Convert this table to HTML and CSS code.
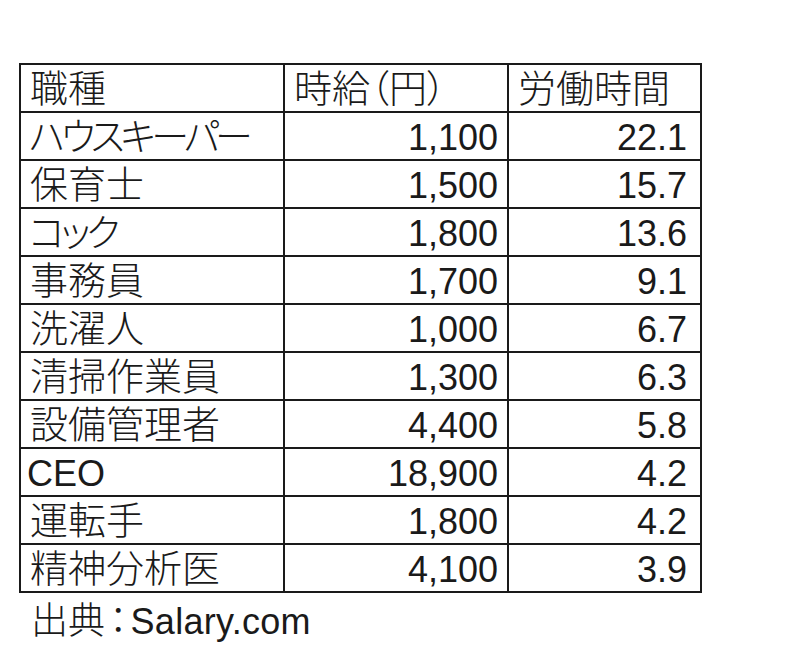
FILE: index.html
```html
<!DOCTYPE html>
<html lang="ja">
<head>
<meta charset="utf-8">
<link rel="stylesheet" href="styles.css">
</head>
<body>
<div class="page">
  <table class="data">
    <colgroup>
      <col class="c1"><col class="c2"><col class="c3">
    </colgroup>
    <tr><td>職種</td><td>時給（円）</td><td>労働時間</td></tr>
    <tr><td class="kana">ハウスキーパー</td><td class="num">1,100</td><td class="num">22.1</td></tr>
    <tr><td>保育士</td><td class="num">1,500</td><td class="num">15.7</td></tr>
    <tr><td class="kana">コック</td><td class="num">1,800</td><td class="num">13.6</td></tr>
    <tr><td>事務員</td><td class="num">1,700</td><td class="num">9.1</td></tr>
    <tr><td>洗濯人</td><td class="num">1,000</td><td class="num">6.7</td></tr>
    <tr><td>清掃作業員</td><td class="num">1,300</td><td class="num">6.3</td></tr>
    <tr><td>設備管理者</td><td class="num">4,400</td><td class="num">5.8</td></tr>
    <tr><td class="latin">CEO</td><td class="num">18,900</td><td class="num">4.2</td></tr>
    <tr><td>運転手</td><td class="num">1,800</td><td class="num">4.2</td></tr>
    <tr><td>精神分析医</td><td class="num">4,100</td><td class="num">3.9</td></tr>
  </table>
  <p class="source">出典<span class="colon">：</span><span class="site">Salary.com</span></p>
</div>
</body>
</html>
```
FILE: styles.css
```css
html, body {
  margin: 0;
  padding: 0;
  background: #ffffff;
}
.page {
  padding: 63px 0 0 19px;
  font-family: "Liberation Sans", "Noto Sans CJK JP", sans-serif;
  font-weight: 300;
  font-feature-settings: "palt";
  color: #1a1a1a;
}
.data {
  border-collapse: collapse;
  table-layout: fixed;
  width: 681px;
  font-size: 38px;
}
.c1 { width: 264px; }
.c2 { width: 224px; }
.c3 { width: 193px; }
.data tr {
  height: 48px;
}
.data td {
  border: 2px solid #1a1a1a;
  padding: 5px 8px 0 9px;
  line-height: 39px;
  height: 39px;
  white-space: nowrap;
  overflow: hidden;
  vertical-align: top;
}
.data td.kana {
  letter-spacing: -4.5px;
  padding-left: 8px;
}
.data td.latin {
  font-size: 36px;
  padding-left: 6px;
}
.data td.num {
  font-size: 36px;
  text-align: right;
  padding-right: 9px;
}
.data td.num + td.num {
  padding-right: 13px;
}
.source {
  margin: 7px 0 0 12px;
  font-size: 37px;
  line-height: 44px;
  font-feature-settings: normal;
}
.colon {
  font-feature-settings: "palt";
  margin: 0 3px 0 4px;
}
.site {
  font-size: 36px;
  letter-spacing: 0.3px;
}
```
